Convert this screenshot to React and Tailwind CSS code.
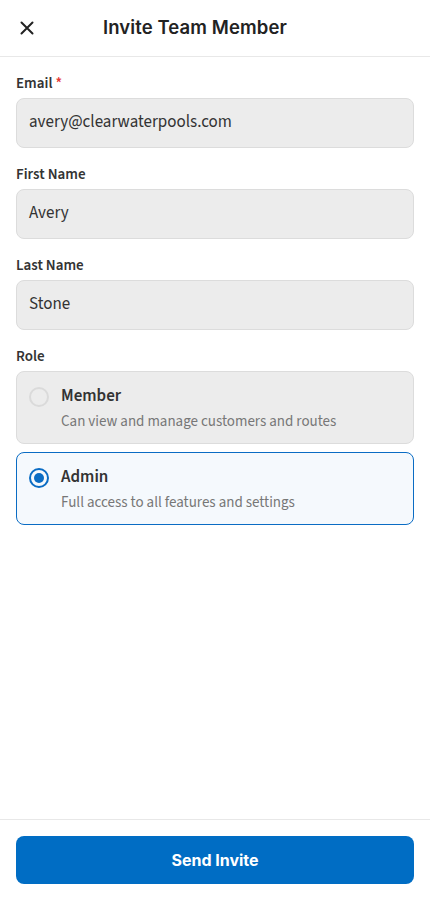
import React from "react";

function Field({ label, value, required }) {
  return (
    <div className="flex flex-col">
      <div className="text-[15px] font-semibold text-[#333] leading-[20px] mb-[4px]">
        {label}
        {required && <span className="text-[#e53935] ml-[3px]">*</span>}
      </div>
      <div className="h-[50px] rounded-[8px] bg-[#ececec] border border-[#dcdcdc] flex items-center px-[12px] text-[17px] text-[#333]">
        {value}
      </div>
    </div>
  );
}

function RoleCard({ title, desc, selected }) {
  return (
    <div
      className={
        "h-[73px] rounded-[8px] border flex items-start px-[12px] pt-[13px] gap-[12px] " +
        (selected ? "bg-[#f5f9fd] border-[#0a6cc4]" : "bg-[#ececec] border-[#dcdcdc]")
      }
    >
      <div
        className={
          "mt-[2px] w-[20px] h-[20px] rounded-full flex items-center justify-center shrink-0 " +
          (selected ? "border-[2.5px] border-[#0a6cc4]" : "border-[2px] border-[#dadada]")
        }
      >
        {selected && <div className="w-[10px] h-[10px] rounded-full bg-[#0a6cc4]" />}
      </div>
      <div className="flex flex-col">
        <div className="text-[17px] font-semibold text-[#333] leading-[22px]">{title}</div>
        <div className="text-[15px] text-[#777] leading-[20px] mt-[5px]">{desc}</div>
      </div>
    </div>
  );
}

export default function App() {
  return (
    <div
      className="w-[430px] h-[900px] bg-white flex flex-col"
      style={{ fontFamily: "'Source Sans 3', Lato, 'Noto Sans', sans-serif" }}
    >
      <div className="h-[57px] border-b border-[#e8e8e8] flex items-center px-[16px] shrink-0">
        <svg width="22" height="22" viewBox="0 0 24 24" fill="none" stroke="#222" strokeWidth="2.2" strokeLinecap="round">
          <path d="M6 6l12 12M18 6L6 18" />
        </svg>
        <div
          className="ml-[65px] text-[18.5px] font-semibold text-[#222] tracking-[0.1px]"
          style={{ fontFamily: "Inter, 'Noto Sans', sans-serif" }}
        >
          Invite Team Member
        </div>
      </div>
      <div className="flex-1 flex flex-col px-[16px] pt-[17px] gap-[17px]">
        <Field label="Email" value="avery@clearwaterpools.com" required />
        <Field label="First Name" value="Avery" />
        <Field label="Last Name" value="Stone" />
        <div className="flex flex-col">
          <div className="text-[15px] font-semibold text-[#333] leading-[20px] mb-[4px]">Role</div>
          <div className="flex flex-col gap-[8px]">
            <RoleCard title="Member" desc="Can view and manage customers and routes" />
            <RoleCard title="Admin" desc="Full access to all features and settings" selected />
          </div>
        </div>
      </div>
      <div className="h-[81px] border-t border-[#e8e8e8] px-[16px] pt-[16px] shrink-0">
        <div
          className="h-[48px] rounded-[8px] bg-[#006dc4] flex items-center justify-center text-white text-[16px] font-bold"
          style={{ fontFamily: "Inter, 'Noto Sans', sans-serif" }}
        >
          Send Invite
        </div>
      </div>
    </div>
  );
}
